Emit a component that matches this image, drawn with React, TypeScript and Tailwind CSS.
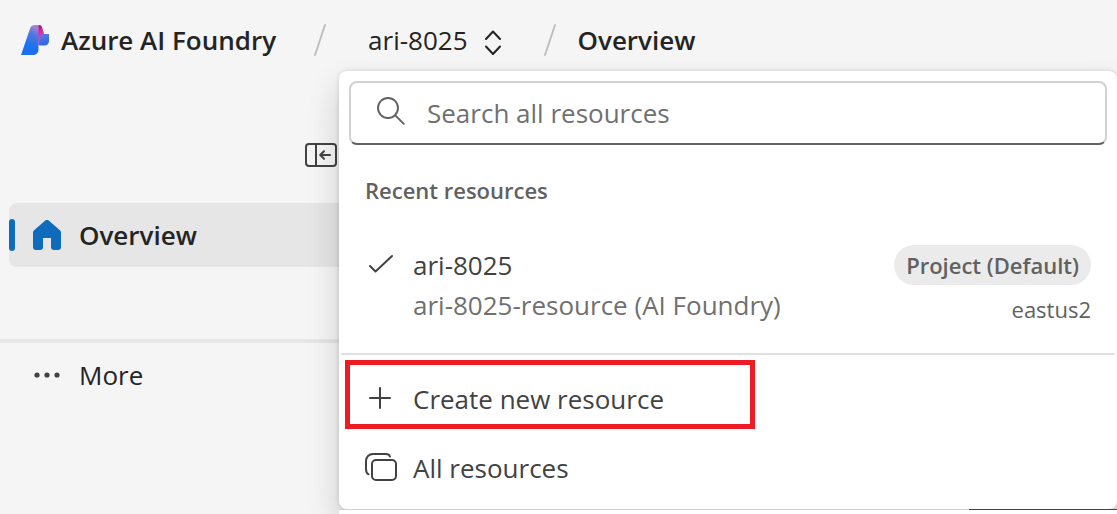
import React from "react";

const font = "font-['Open_Sans','Segoe_UI',sans-serif]";

function FoundryLogo() {
  return (
    <svg viewBox="0 0 28 30" className="h-[30px] w-7 shrink-0" aria-hidden="true">
      <defs>
        <linearGradient id="body" x1="0.7" y1="0" x2="0.4" y2="1">
          <stop offset="0" stopColor="#b07fd0" />
          <stop offset="0.3" stopColor="#4f78e0" />
          <stop offset="0.7" stopColor="#1a72ee" />
          <stop offset="1" stopColor="#1a70f0" />
        </linearGradient>
        <linearGradient id="fold" x1="0" y1="0" x2="0.2" y2="1">
          <stop offset="0" stopColor="#7a1f63" />
          <stop offset="0.35" stopColor="#d3269a" />
          <stop offset="1" stopColor="#e85ac0" />
        </linearGradient>
        <linearGradient id="wing" x1="0.3" y1="0" x2="0.5" y2="1">
          <stop offset="0" stopColor="#5a78e6" />
          <stop offset="1" stopColor="#2a68e0" />
        </linearGradient>
      </defs>
      <path d="M15 0h3.500c1.400 0 2.200 1 2.700 2.600L23.500 10.500 18.500 20H16z" fill="url(#fold)" />
      <path d="M22.800 9H28v7c0 2.700-1.800 4.500-4.500 4.500h-5.300c0-2.500.1-4 .6-6.500.6-3 1.800-5 4-5z" fill="url(#wing)" />
      <path d="M14 0h4c-.4.700-.5 1.500-.5 2.600v21.900c0 3.200-2.200 5.500-5.500 5.500H0L9 3.800C9.900 1.200 11.400 0 14 0z" fill="url(#body)" />
    </svg>
  );
}

function Slash() {
  return (
    <svg viewBox="0 0 12 32" className="h-8 w-3 shrink-0" fill="none" stroke="#bdbdbd" strokeWidth="1.900" strokeLinecap="round" aria-hidden="true">
      <path d="M11 1 1 31" />
    </svg>
  );
}

function UpDownIcon() {
  return (
    <svg viewBox="0 0 18 30" className="h-[30px] w-[18px]" fill="none" stroke="#242424" strokeWidth="2" strokeLinecap="round" strokeLinejoin="round" aria-hidden="true">
      <path d="M2 14 9 6.500l7 7.500M2 21.500 9 29l7-7.500" />
    </svg>
  );
}

function CollapseIcon() {
  return (
    <svg viewBox="0 0 32 24" className="h-6 w-8" fill="none" stroke="#424242" strokeWidth="2" strokeLinecap="round" strokeLinejoin="round" aria-hidden="true">
      <rect x="1" y="1" width="30" height="22" rx="3" />
      <path d="M11 1v22M25 12H15.500M19 8.200 15.200 12l3.800 3.800" />
    </svg>
  );
}

function HomeIcon() {
  return (
    <svg viewBox="0 0 28 30" className="h-[30px] w-7 shrink-0" fill="#0f6cbd" aria-hidden="true">
      <path d="M12 .8a3 3 0 0 1 4 0l10.900 9.500A3.200 3.200 0 0 1 28 12.700V27a3 3 0 0 1-3 3h-4a3 3 0 0 1-3-3v-9h-8v9a3 3 0 0 1-3 3H3a3 3 0 0 1-3-3V12.700c0-.9.400-1.800 1.100-2.400z" />
    </svg>
  );
}

function MoreIcon() {
  return (
    <svg viewBox="0 0 28 6" className="h-[6px] w-7 shrink-0" fill="#424242" aria-hidden="true">
      <circle cx="4" cy="3" r="2.600" />
      <circle cx="14" cy="3" r="2.600" />
      <circle cx="24" cy="3" r="2.600" />
    </svg>
  );
}

function SearchIcon() {
  return (
    <svg viewBox="0 0 28 32" className="h-8 w-7 shrink-0" fill="none" stroke="#616161" strokeWidth="1.900" strokeLinecap="round" aria-hidden="true">
      <circle cx="11" cy="11" r="10" />
      <path d="m18.300 18.300 8.500 8.500" />
    </svg>
  );
}

function CheckIcon() {
  return (
    <svg viewBox="0 0 32 40" className="h-10 w-8" fill="none" stroke="#424242" strokeWidth="2" strokeLinecap="round" strokeLinejoin="round" aria-hidden="true">
      <path d="m5 21 5.500 5.500L27 11" />
    </svg>
  );
}

function PlusIcon() {
  return (
    <svg viewBox="0 0 32 32" className="h-8 w-8" fill="none" stroke="#424242" strokeWidth="2" strokeLinecap="round" aria-hidden="true">
      <path d="M15 5v20M5 15h20" />
    </svg>
  );
}

function StackIcon() {
  return (
    <svg viewBox="0 0 32 32" className="h-8 w-8" fill="none" stroke="#424242" strokeWidth="2" strokeLinecap="round" aria-hidden="true">
      <rect x="7" y="8" width="24" height="20" rx="4" />
      <path d="M25 4.500C24.400 3 23.200 2 21 2H8C4 2 1 5 1 9v8c0 2.800.8 4.500 2.500 5.300" />
    </svg>
  );
}

function Header() {
  return (
    <header className="flex h-20 items-center pl-[21px] text-[26px] leading-9 text-[#242424]">
      <a href="#home" className="flex items-center gap-3 font-semibold whitespace-nowrap">
        <FoundryLogo />
        Azure AI Foundry
      </a>
      <nav aria-label="Breadcrumb" className="ml-[38px] flex items-center">
        <Slash />
        <button type="button" aria-expanded="true" className="ml-[42px] flex items-center gap-4">
          ari-8025
          <UpDownIcon />
        </button>
        <span className="mr-[22px] ml-[42px] flex"><Slash /></span>
        <span className="font-semibold">Overview</span>
      </nav>
    </header>
  );
}

function Sidebar() {
  return (
    <aside className="w-[339px] shrink-0 text-[26px] leading-9 text-[#242424]">
      <div className="flex justify-end pt-[63px] pr-0.5">
        <button type="button" aria-label="Collapse sidebar">
          <CollapseIcon />
        </button>
      </div>
      <nav aria-label="Main">
        <a href="#overview" aria-current="page" className="mt-9 ml-[9px] flex h-16 items-center rounded-l-lg bg-[#e6e6e6] font-semibold">
          <span className="mr-[18px] h-8 w-1.5 rounded-full bg-[#0f6cbd]" />
          <HomeIcon />
          <span className="ml-[18px]">Overview</span>
        </a>
        <hr className="mt-[72px] border-t-4 border-[#e6e6e6]" />
        <button type="button" className="mt-[14px] ml-[33px] flex items-center gap-[18px]">
          <MoreIcon />
          More
        </button>
      </nav>
    </aside>
  );
}

function ResourceMenu() {
  return (
    <div className="absolute top-[71px] right-0 left-[339px] rounded-lg bg-white pb-[21px] text-[26px] leading-10 text-[#424242] shadow-[0_0_4px_rgba(0,0,0,0.14),0_16px_32px_rgba(0,0,0,0.18)]">
      <div className="px-[10px] pt-[10px]">
        <label className="flex h-16 items-center gap-[22px] rounded-lg border-2 border-[#d1d1d1] border-b-[#616161] pl-[26px]">
          <SearchIcon />
          <input type="search" aria-label="Search all resources" placeholder="Search all resources" className="min-w-0 flex-1 bg-transparent outline-none placeholder:text-[#707070]" />
        </label>
      </div>
      <h2 className="px-[26px] pt-[25px] text-[22px] leading-10 font-semibold text-[#616161]">Recent resources</h2>
      <button type="button" className="mt-[35px] flex w-full items-start gap-4 pr-[26px] pl-[26px] text-left">
        <CheckIcon />
        <span className="flex flex-1 flex-col">
          <span>ari-8025</span>
          <span className="text-[#707070]">ari-8025-resource (AI Foundry)</span>
        </span>
        <span className="flex flex-col items-end text-[22px] text-[#616161]">
          <span className="rounded-full bg-[#ebebeb] px-3 font-semibold">Project (Default)</span>
          <span className="pt-1">eastus2</span>
        </span>
      </button>
      <hr className="mx-0.5 mt-6 border-t-2 border-[#e0e0e0]" />
      <div className="px-1.5 pt-[5px]">
        <button type="button" className="flex h-[69px] w-[410px] items-center gap-4 border-5 border-[#ed1c24] pt-2 pl-[15px]">
          <PlusIcon />
          Create new resource
        </button>
      </div>
      <button type="button" className="mt-[19px] flex w-full items-center gap-4 pl-[26px]">
        <StackIcon />
        All resources
      </button>
    </div>
  );
}

export default function App() {
  return (
    <div className={`relative flex min-h-screen flex-col overflow-hidden bg-[#f5f5f5] ${font}`}>
      <Header />
      <div className="flex flex-1">
        <Sidebar />
        <main className="flex flex-1 flex-col justify-end">
          <div className="relative z-10 flex h-[5px] bg-white">
            <div className="flex-1 border-t border-[#d1d1d1]" />
            <div className="w-[148px] border-t border-[#424242]" />
          </div>
        </main>
      </div>
      <ResourceMenu />
    </div>
  );
}
